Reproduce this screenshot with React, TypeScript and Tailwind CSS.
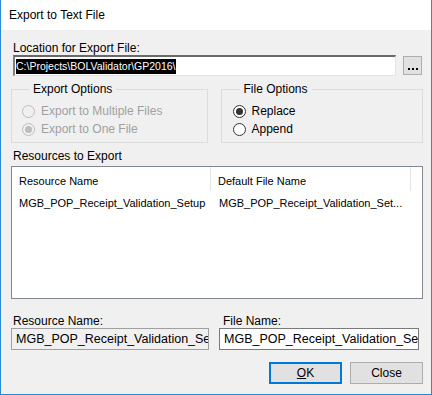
import type { ReactNode } from 'react';

const ui = { fontFamily: '"Liberation Sans", Arial, sans-serif' };

function Radio({ checked, disabled, label }: { checked?: boolean; disabled?: boolean; label: string }) {
  return (
    <div className="flex items-center h-[18px]">
      <div
        className={`w-[13px] h-[13px] rounded-full border flex items-center justify-center ${
          disabled ? 'border-[#bcbcbc] bg-[#f0f0f0]' : 'border-[#333333] bg-white'
        }`}
      >
        {checked && (
          <div className={`w-[7px] h-[7px] rounded-full ${disabled ? 'bg-[#bcbcbc]' : 'bg-[#333333]'}`} />
        )}
      </div>
      <span className={`ml-[6px] text-[12px] leading-[14px] ${disabled ? 'text-[#a0a0a0]' : 'text-black'}`}>
        {label}
      </span>
    </div>
  );
}

function GroupBox({ title, className, children }: { title: string; className: string; children: ReactNode }) {
  return (
    <fieldset className={`border border-[#dcdcdc] ${className}`}>
      <legend className="ml-[7px] px-[4px] text-[12px] leading-[14px] text-black">{title}</legend>
      {children}
    </fieldset>
  );
}

export default function App() {
  return (
    <div
      className="w-[432px] h-[395px] flex flex-col border border-t-0 border-[#2b8ad6] bg-[#f0f0f0] text-black"
      style={ui}
    >
      <div className="h-[30px] bg-white flex items-center pl-[8px] text-[12px]">Export to Text File</div>

      <div className="flex flex-col pl-[10px] pr-[8px]">
        <div className="pl-[2px] pt-[11px] text-[12px] leading-[14px]">Location for Export File:</div>
        <div className="flex items-center pl-[2px]">
          <div className="w-[383px] h-[21px] bg-white border-t-2 border-l-2 border-r border-b border-t-[#696969] border-l-[#808080] border-r-[#e3e3e3] border-b-[#e3e3e3] flex items-center pl-[1px]">
            <span className="bg-black text-white text-[10.5px] leading-[15px]">C:\Projects\BOLValidator\GP2016\</span>
          </div>
          <div className="ml-[7px] w-[19px] h-[19px] border border-[#adadad] bg-[#e1e1e1] flex items-end justify-center pb-[4px]">
            <div className="flex gap-[2px]">
              <div className="w-[2px] h-[2px] bg-black" />
              <div className="w-[2px] h-[2px] bg-black" />
              <div className="w-[2px] h-[2px] bg-black" />
            </div>
          </div>
        </div>

        <div className="flex mt-[6px] gap-[13px]">
          <GroupBox title="Export Options" className="w-[197px] h-[61px] pl-[10px] pt-[6px]">
            <Radio disabled label="Export to Multiple Files" />
            <Radio disabled checked label="Export to One File" />
          </GroupBox>
          <GroupBox title="File Options" className="w-[203px] h-[61px] pl-[11px] pt-[6px]">
            <Radio checked label="Replace" />
            <Radio label="Append" />
          </GroupBox>
        </div>

        <div className="pl-[2px] mt-[6px] text-[12px] leading-[14px]">Resources to Export</div>
        <div className="mt-[3px] w-[412px] h-[133px] border border-[#828790] bg-white text-[11px]">
          <div className="flex h-[24px]">
            <div className="w-[199px] border-r border-[#e5e5e5] pl-[7px] pt-[8px] leading-[13px]">Resource Name</div>
            <div className="w-[200px] border-r border-[#e5e5e5] pl-[7px] pt-[8px] leading-[13px]">Default File Name</div>
          </div>
          <div className="flex pt-[6px] leading-[13px]">
            <div className="w-[200px] pl-[7px] whitespace-nowrap">MGB_POP_Receipt_Validation_Setup</div>
            <div className="w-[200px] pl-[7px] whitespace-nowrap">MGB_POP_Receipt_Validation_Set...</div>
          </div>
        </div>

        <div className="flex mt-[15px] gap-[10px]">
          <div className="flex flex-col">
            <div className="pl-[2px] text-[12px] leading-[14px]">Resource Name:</div>
            <div className="w-[198px] h-[22px] border border-[#a0a0a0] bg-[#f0f0f0] flex items-center pl-[4px] overflow-hidden whitespace-nowrap text-[12.5px]">
              MGB_POP_Receipt_Validation_Setup
            </div>
          </div>
          <div className="flex flex-col">
            <div className="pl-[4px] text-[12px] leading-[14px]">File Name:</div>
            <div className="w-[200px] h-[22px] border border-[#7a7a7a] bg-white flex items-center pl-[4px] overflow-hidden whitespace-nowrap text-[12.5px]">
              MGB_POP_Receipt_Validation_Setup.txt
            </div>
          </div>
        </div>

        <div className="flex justify-end mt-[12px] gap-[8px]">
          <div className="w-[73px] h-[22px] border-2 border-[#0078d7] bg-[#e1e1e1] flex items-center justify-center text-[12px]">
            <span>
              <span className="underline">O</span>K
            </span>
          </div>
          <div className="w-[73px] h-[22px] border border-[#adadad] bg-[#e1e1e1] flex items-center justify-center text-[12px]">
            Close
          </div>
        </div>
      </div>
    </div>
  );
}
